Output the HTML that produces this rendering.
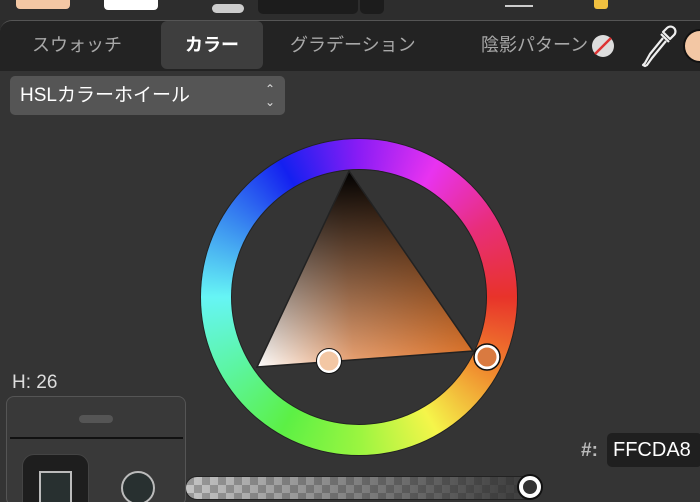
<!DOCTYPE html>
<html><head><meta charset="utf-8"><style>
*{margin:0;padding:0;box-sizing:border-box}
html,body{width:700px;height:502px;overflow:hidden}
body{background:#2b2b2b;font-family:"Liberation Sans","Noto Sans CJK JP",sans-serif;position:relative}
.top{position:absolute;left:0;top:0;width:700px;height:20px;background:#2d2d2d}
.panel{position:absolute;left:0;top:20px;width:700px;height:482px;background:#343434;border-radius:12px 0 0 0;border-top:1px solid #555;overflow:hidden}
.tabs{position:absolute;left:0;top:0;width:700px;height:50px;background:#232323}
.tab{position:absolute;top:0;height:48px;line-height:48px;color:#a8a8a8;font-size:18px}
.sel{background:#3e3e3e;border-radius:6px;color:#fff;text-align:center;font-weight:bold}
.dd{position:absolute;left:10px;top:55px;width:275px;height:39px;background:#555;border-radius:5px;color:#fff;font-size:19px;line-height:39px;padding-left:10px}
.abs{position:absolute}
</style></head><body>
<div class="top">
 <div class="abs" style="left:16px;top:0;width:54px;height:9px;background:#f3c7a4;border-radius:0 0 4px 4px"></div>
 <div class="abs" style="left:104px;top:0;width:54px;height:10px;background:#fff;border-radius:0 0 4px 4px"></div>
 <div class="abs" style="left:212px;top:4px;width:32px;height:9px;background:#ccc;border-radius:5px"></div>
 <div class="abs" style="left:258px;top:0;width:100px;height:14px;background:#1c1c1c;border-radius:0 0 5px 5px"></div>
 <div class="abs" style="left:360px;top:0;width:24px;height:14px;background:#1c1c1c;border-radius:0 0 5px 5px"></div>
 <div class="abs" style="left:505px;top:5px;width:28px;height:2px;background:#ccc"></div>
 <div class="abs" style="left:594px;top:0;width:14px;height:9px;background:#f0c040;border-radius:0 0 3px 3px"></div>
</div>
<div class="panel">
 <div class="tabs">
  <div class="tab" style="left:32px">スウォッチ</div>
  <div class="tab sel" style="left:161px;width:102px">カラー</div>
  <div class="tab" style="left:290px">グラデーション</div>
  <div class="tab" style="left:481px">陰影パターン</div>
  <svg class="abs" style="left:590px;top:12px" width="26" height="26"><circle cx="13" cy="13" r="11" fill="#ddd"/><line x1="5" y1="21" x2="21" y2="5" stroke="#d33" stroke-width="2.5"/></svg>
  <svg class="abs" style="left:638px;top:4px" width="40" height="44" fill="none" stroke="#eee" stroke-width="2.2" stroke-linejoin="round"><path d="M29 3 a4 4 0 0 1 7 7 l-4 4 l-7 -7 z M23 9 l8 8 M25 13 L12 29 L7 38 L5 40 L7 41 L9 40 L14 33 L28 16"/></svg>
  <div class="abs" style="left:683px;top:8px;width:34px;height:34px;border-radius:50%;background:#f3c7a4;border:2px solid #111"></div>
 </div>
 <div class="dd">HSLカラーホイール<span class="abs" style="right:10px;top:0;font-size:12px;color:#ddd;line-height:13px;padding-top:7px">⌃<br>⌄</span></div>
 <div class="abs" style="left:12px;top:351px;color:#ddd;font-size:19px">H: 26</div>
 <div class="abs" style="left:581px;top:419px;color:#bbb;font-size:19px;font-weight:bold">#:</div>
 <div class="abs" style="left:607px;top:412px;width:95px;height:34px;background:#1f1f1f;border-radius:5px;color:#fff;font-size:20px;line-height:34px;padding-left:6px">FFCDA8</div>
 <div class="abs" style="left:185px;top:455px;width:355px;height:24px;border-radius:12px;background-color:#777;background-image:linear-gradient(90deg,rgba(40,40,40,0),rgba(40,40,40,0.9)),repeating-conic-gradient(#c4c4c4 0 25%,#999 0 50%);background-size:100% 100%,16px 16px;border:1px solid #222"></div>
 <div class="abs" style="left:519px;top:455px;width:22px;height:22px;border-radius:50%;background:#333;border:4px solid #fff;box-shadow:0 0 0 2px #111"></div>
</div>
<div class="abs" style="left:201px;top:139px;width:316px;height:316px;border-radius:50%;background:conic-gradient(#8a1cf5 0deg,#e833f0 30deg,#e82e7a 60deg,#e8332a 90deg,#f08a2e 120deg,#f5f54a 150deg,#9af540 180deg,#5cf045 210deg,#5cf5a0 240deg,#66f5f5 270deg,#3a8cf0 300deg,#1420f0 330deg,#8a1cf5 360deg);box-shadow:0 0 0 1px #222"></div>
<div class="abs" style="left:232px;top:170px;width:254px;height:254px;border-radius:50%;background:#343434;box-shadow:0 0 0 1px #222"></div>
<svg class="abs" style="left:0;top:0" width="700" height="502">
 <defs>
  <linearGradient id="g1" x1="257" y1="367" x2="473" y2="351" gradientUnits="userSpaceOnUse"><stop offset="0" stop-color="#fff"/><stop offset="0.45" stop-color="#e8a070"/><stop offset="1" stop-color="#dc7228"/></linearGradient>
  <linearGradient id="g2" x1="349" y1="171" x2="360" y2="362" gradientUnits="userSpaceOnUse"><stop offset="0" stop-color="#000"/><stop offset="0.5" stop-color="#000" stop-opacity="0.5"/><stop offset="1" stop-color="#000" stop-opacity="0"/></linearGradient>
 </defs>
 <polygon points="349,171 257,367 473,351" fill="url(#g1)"/>
 <polygon points="349,171 257,367 473,351" fill="url(#g2)" stroke="#222" stroke-width="1.5"/>
 <circle cx="329" cy="361" r="11" fill="#f3c7a4" stroke="#fff" stroke-width="3"/>
 <circle cx="329" cy="361" r="12.5" fill="none" stroke="#111" stroke-width="1"/>
 <circle cx="487" cy="357" r="11" fill="#d97a40" stroke="#fff" stroke-width="3"/>
 <circle cx="487" cy="357" r="13" fill="none" stroke="#111" stroke-width="1.5"/>
</svg>
<div class="abs" style="left:6px;top:396px;width:180px;height:110px;background:#393939;border:1px solid #555;border-radius:8px;overflow:hidden">
 <div class="abs" style="left:72px;top:18px;width:34px;height:8px;background:#555;border-radius:4px"></div>
 <div class="abs" style="left:3px;top:40px;width:173px;height:2px;background:#111"></div>
 <div class="abs" style="left:15px;top:57px;width:67px;height:60px;background:#1e1e1e;border-radius:12px;border:1px solid #444"></div>
 <div class="abs" style="left:32px;top:74px;width:33px;height:34px;background:#283030;border:2px solid #bbb"></div>
 <div class="abs" style="left:114px;top:74px;width:34px;height:34px;border-radius:50%;background:#283030;border:2px solid #bbb"></div>
</div>
</body></html>
